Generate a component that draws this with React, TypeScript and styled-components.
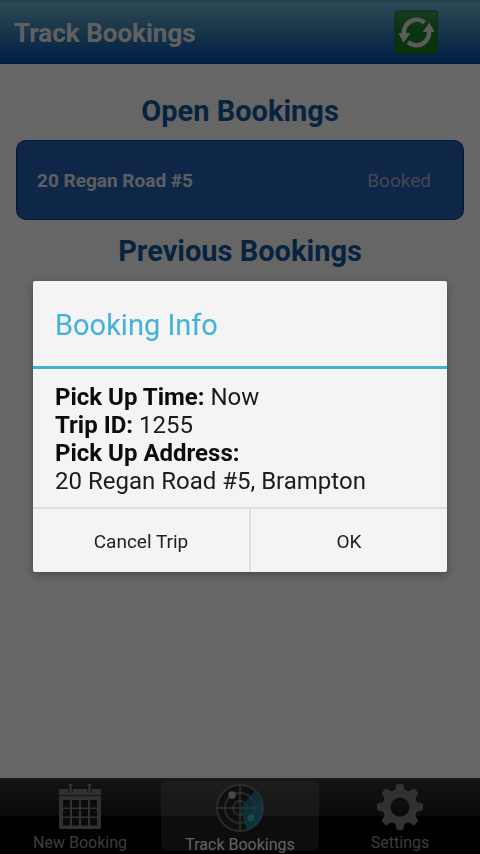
import React from "react";
import styled, { createGlobalStyle } from "styled-components";

const GlobalStyle = createGlobalStyle`
  *, *::before, *::after { box-sizing: border-box; }
  body { margin: 0; background: #fff; font-family: Roboto, "Liberation Sans", sans-serif; }
  button { font: inherit; color: inherit; border: 0; padding: 0; background: none; cursor: pointer; }
`;

const Screen = styled.div`
  min-height: 100vh;
  display: flex;
  flex-direction: column;
`;

const Header = styled.header`
  height: 64px;
  flex: none;
  display: flex;
  align-items: center;
  justify-content: space-between;
  padding: 0 42px 0 14px;
  background: linear-gradient(#5f9db4 0%, #70b4d8 5%, #3c83b8 50%, #0d58b0 90%, #0b4ba6 100%);
  border-bottom: 1px solid #0a3c84;
`;

const Title = styled.h1`
  margin: 0;
  font-size: 26px;
  line-height: 32px;
  font-weight: 700;
  color: #f0f0f0;
  padding-top: 3px;
`;

const RefreshButton = styled.button`
  width: 44px;
  height: 44px;
  display: grid;
  place-items: center;
`;

const Content = styled.main`
  flex: 1;
  padding: 28px 16px;
`;

const SectionTitle = styled.h2`
  margin: 0;
  font-size: 29px;
  line-height: 38px;
  font-weight: 700;
  text-align: center;
  color: #14589f;
`;

const BookingCard = styled.button`
  width: 100%;
  height: 80px;
  margin: 10px 0 12px;
  padding: 2px 31px 0 19px;
  display: flex;
  align-items: center;
  justify-content: space-between;
  border: 2px solid #14448c;
  border-width: 1px 2px;
  border-radius: 10px;
  background: #2460b4;
  font-size: 19px;
  line-height: 24px;
`;

const BookingAddress = styled.span`
  font-weight: 700;
  color: #e6ecf5;
`;

const BookingStatus = styled.span`
  color: #a3b4d2;
`;

const TabBar = styled.nav`
  flex: none;
  height: 76px;
  display: flex;
  padding: 3px 0;
  background: linear-gradient(#484848 0, #303030 3px, #1c1c1c 50%, #000 50%);
`;

const Tab = styled.button<{ $active?: boolean }>`
  flex: 1;
  margin: 0 1px;
  padding-top: 3px;
  display: flex;
  flex-direction: column;
  align-items: center;
  justify-content: flex-start;
  border-radius: 5px;
  font-size: 16px;
  line-height: 22px;
  background: ${(p) => (p.$active ? "rgba(255, 255, 255, 0.13)" : "none")};
  color: ${(p) => (p.$active ? "#f0f0f0" : "#969696")};
  font-weight: 400;

  svg { flex: none; }
`;

const Scrim = styled.div`
  position: fixed;
  inset: 0;
  display: flex;
  align-items: center;
  justify-content: center;
  padding: 0 33px 1px;
  background: rgba(0, 0, 0, 0.6);
`;

const Dialog = styled.section`
  width: 100%;
  max-width: 480px;
  border-radius: 2px;
  overflow: hidden;
  background: #f4f4f4;
  box-shadow: 0 3px 10px rgba(0, 0, 0, 0.3);
`;

const DialogTitle = styled.h2`
  margin: 0;
  padding: 26px 22px 23px;
  font-size: 29px;
  line-height: 36px;
  font-weight: 400;
  color: #41b2dc;
  border-bottom: 3px solid #43b1d3;
`;

const Details = styled.dl`
  margin: 0;
  padding: 14px 22px 12px;
  font-size: 24px;
  line-height: 28px;
  color: #1c1c1c;

  dt, dd { display: inline; margin: 0; }
  dt { font-weight: 700; color: #0c0c0c; }
`;

const Address = styled.div`
  dd { display: block; }
`;

const Actions = styled.div`
  display: flex;
  border-top: 2px solid #e0e0e0;
`;

const Action = styled.button`
  flex: 1 1 auto;
  height: 63px;
  padding-top: 2px;
  font-size: 19px;
  line-height: 24px;
  color: #222;

  &:first-child { flex: 0 0 218px; border-right: 2px solid #e0e0e0; }
`;

const RefreshIcon = () => (
  <svg width="44" height="44" viewBox="0 0 44 44" aria-hidden="true">
    <defs>
      <linearGradient id="refreshFill" x1="0" y1="0" x2="0" y2="1">
        <stop offset="0" stopColor="#3f9550" />
        <stop offset="0.5" stopColor="#138226" />
        <stop offset="1" stopColor="#148022" />
      </linearGradient>
    </defs>
    <rect x="1" y="1" width="43" height="43" rx="3" fill="url(#refreshFill)" stroke="#176b48" />
    <path d="M30.500 12.500A12.700 12.700 0 0 0 10 24" fill="none" stroke="#e4e4e4" strokeWidth="4.600" />
    <path d="M4.500 23H16.500L9.500 33Z" fill="#e4e4e4" />
    <path d="M14 32A12.700 12.700 0 0 0 35 20.500" fill="none" stroke="#e4e4e4" strokeWidth="4.600" />
    <path d="M28.500 22H40.500L35.500 12.500Z" fill="#e4e4e4" />
  </svg>
);

const CalendarIcon = () => (
  <svg width="42" height="48" viewBox="0 0 42 48" aria-hidden="true">
    <rect y="5" width="42" height="40" rx="1" fill="#7c7c7c" />
    <path d="M0 11.500H42" stroke="#404040" strokeWidth="1.500" />
    <path d="M11.500 0V9M30.500 0V9" stroke="#303030" strokeWidth="4.500" />
    <path d="M11.500 0V9M30.500 0V9" stroke="#7c7c7c" strokeWidth="2.500" />
    {[16, 25, 34].map((y) =>
      [4, 13, 22, 31].map((x) => (
        <rect key={`${x}-${y}`} x={x} y={y} width="7" height="7.500" fill="#1c1c1c" />
      ))
    )}
  </svg>
);

const RadarIcon = () => (
  <svg width="50" height="50" viewBox="-25 -24 50 50" aria-hidden="true">
    <defs>
      <linearGradient id="sweep" x1="0" y1="0" x2="1" y2="0.600">
        <stop offset="0" stopColor="#1d6f80" stopOpacity="0.300" />
        <stop offset="1" stopColor="#2496ab" />
      </linearGradient>
    </defs>
    <circle r="23.500" fill="#262626" />
    <path d="M0 0L15.500 -17.500A23.500 23.500 0 0 1 7 22.500Z" fill="url(#sweep)" />
    <g fill="none" stroke="#8a8a8a" strokeWidth="1.800" strokeOpacity="0.700">
      <circle r="23" />
      <circle r="15" />
      <circle r="7" />
      <path d="M0 -23V23M-23 0H23" />
    </g>
    <path d="M0 0L15.500 -17.500A23.500 23.500 0 0 1 7 22.500Z" fill="#1d8297" fillOpacity="0.450" />
    <circle cx="-8" cy="-13" r="3.800" fill="#b4b4b4" />
    <circle cx="11" cy="10" r="3.500" fill="#52b6c6" />
  </svg>
);

const GearIcon = () => (
  <svg width="48" height="48" viewBox="-24 -23 48 48" aria-hidden="true">
    <circle r="13.500" fill="none" stroke="#7c7c7c" strokeWidth="8" />
    {[0, 45, 90, 135, 180, 225, 270, 315].map((angle) => (
      <path
        key={angle}
        transform={`rotate(${angle})`}
        d="M-6.500 -15Q-4 -17 -3.800 -21Q-3.700 -23 -2 -23H2Q3.700 -23 3.800 -21Q4 -17 6.500 -15Z"
        fill="#7c7c7c"
      />
    ))}
  </svg>
);

export default function App() {
  return (
    <>
      <GlobalStyle />
      <Screen>
        <Header>
          <Title>Track Bookings</Title>
          <RefreshButton aria-label="Refresh">
            <RefreshIcon />
          </RefreshButton>
        </Header>
        <Content>
          <SectionTitle>Open Bookings</SectionTitle>
          <BookingCard>
            <BookingAddress>20 Regan Road #5</BookingAddress>
            <BookingStatus>Booked</BookingStatus>
          </BookingCard>
          <SectionTitle>Previous Bookings</SectionTitle>
        </Content>
        <TabBar>
          <Tab>
            <CalendarIcon />
            New Booking
          </Tab>
          <Tab $active aria-current="page">
            <RadarIcon />
            Track Bookings
          </Tab>
          <Tab>
            <GearIcon />
            Settings
          </Tab>
        </TabBar>
      </Screen>
      <Scrim>
        <Dialog role="dialog" aria-modal="true" aria-labelledby="dialog-title">
          <DialogTitle id="dialog-title">Booking Info</DialogTitle>
          <Details>
            <div>
              <dt>Pick Up Time:</dt> <dd>Now</dd>
            </div>
            <div>
              <dt>Trip ID:</dt> <dd>1255</dd>
            </div>
            <Address>
              <dt>Pick Up Address:</dt>
              <dd>20 Regan Road #5, Brampton</dd>
            </Address>
          </Details>
          <Actions>
            <Action>Cancel Trip</Action>
            <Action>OK</Action>
          </Actions>
        </Dialog>
      </Scrim>
    </>
  );
}
